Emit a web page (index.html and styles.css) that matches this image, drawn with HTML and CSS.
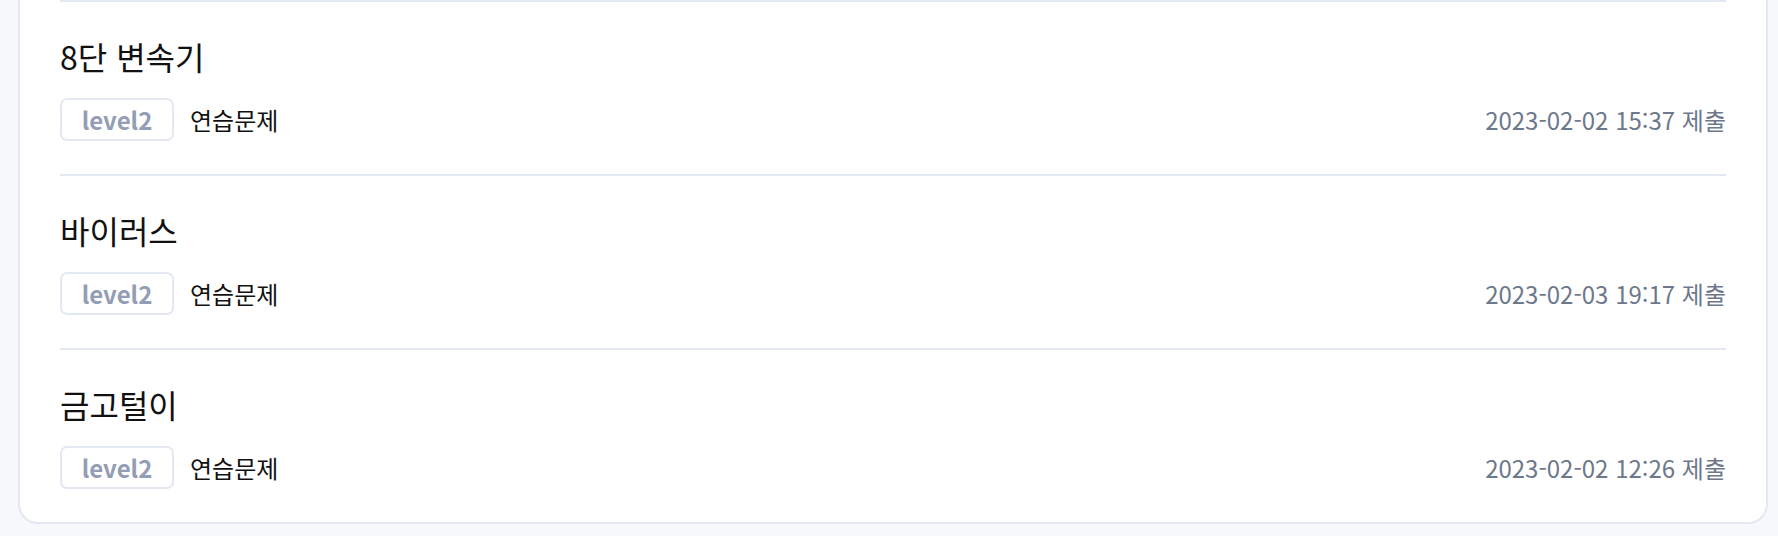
FILE: index.html
```html
<!DOCTYPE html>
<html lang="ko">
<head>
<meta charset="utf-8">
<link rel="stylesheet" href="styles.css">
</head>
<body>
<div class="card">
  <ul class="list">
    <li class="item">
      <div class="title">8단 변속기</div>
      <div class="meta">
        <span class="badge">level2</span>
        <span class="kind">연습문제</span>
        <span class="date">2023-02-02 15:37 제출</span>
      </div>
    </li>
    <li class="item">
      <div class="title">바이러스</div>
      <div class="meta">
        <span class="badge">level2</span>
        <span class="kind">연습문제</span>
        <span class="date">2023-02-03 19:17 제출</span>
      </div>
    </li>
    <li class="item">
      <div class="title">금고털이</div>
      <div class="meta">
        <span class="badge">level2</span>
        <span class="kind">연습문제</span>
        <span class="date">2023-02-02 12:26 제출</span>
      </div>
    </li>
  </ul>
</div>
</body>
</html>
```
FILE: styles.css
```css
html, body {
  margin: 0;
  padding: 0;
}
body {
  background: #f7f8fc;
  font-family: "Noto Sans CJK KR", "Noto Sans", sans-serif;
  padding: 0 10px 12px 18px;
}
.card {
  background: #ffffff;
  border: 2px solid #e4e8f1;
  border-top: none;
  border-radius: 0 0 20px 20px;
  padding: 0 40px;
}
.list {
  list-style: none;
  margin: 0;
  padding: 0;
}
.item {
  border-top: 2px solid #e4e8f1;
  padding: 34px 0 33px;
  display: flex;
  flex-direction: column;
  gap: 22px;
}
.title {
  font-size: 32px;
  line-height: 40px;
  color: #111111;
}
.meta {
  display: flex;
  align-items: center;
  gap: 16px;
  height: 43px;
}
.badge {
  box-sizing: border-box;
  height: 43px;
  width: 114px;
  display: flex;
  align-items: center;
  justify-content: center;
  border: 2px solid #e4e8f1;
  border-radius: 7px;
  color: #939db5;
  font-weight: 700;
  font-size: 24px;
}
.kind {
  font-size: 24px;
  color: #111111;
}
.date {
  margin-left: auto;
  font-size: 24px;
  color: #6d788b;
}
```
